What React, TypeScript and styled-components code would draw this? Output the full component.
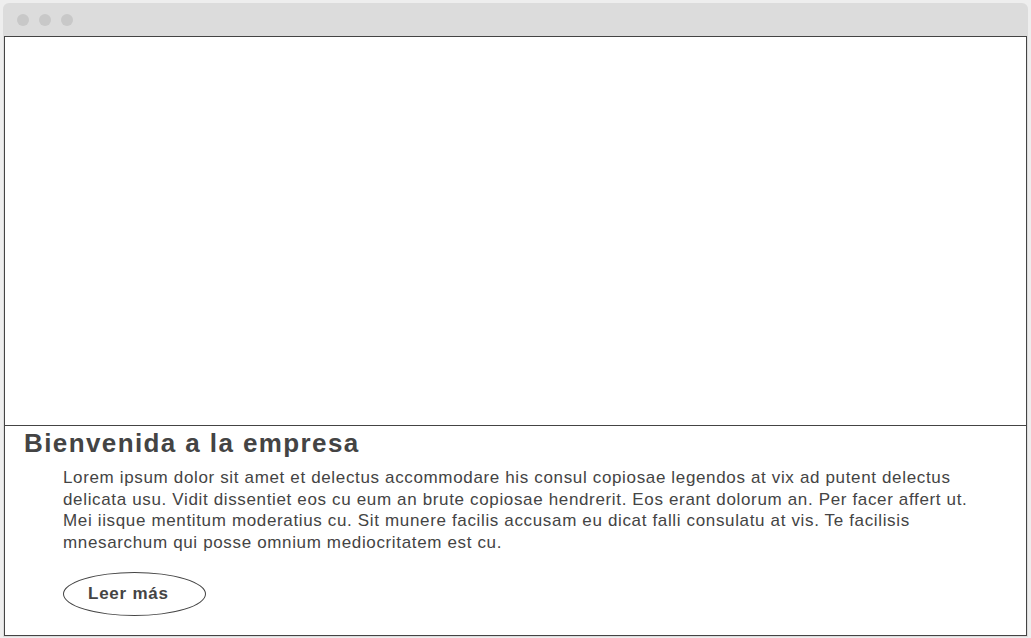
import React from "react";
import styled, { createGlobalStyle } from "styled-components";

const Global = createGlobalStyle`
  html, body { margin: 0; padding: 0; background: #eeeeee; }
  body { font-family: "Liberation Sans", Arial, sans-serif; }
`;

const Window = styled.div`
  margin: 3px 0 0 3px;
  width: 1025px;
  height: 634px;
  box-sizing: border-box;
  background: #dcdcdc;
  border-radius: 6px 6px 0 0;
  padding: 0 1px 1px 1px;
  display: flex;
  flex-direction: column;
`;

const TitleBar = styled.div`
  height: 33px;
  display: flex;
  align-items: center;
  gap: 10px;
  padding-left: 13px;
  flex-shrink: 0;
`;

const Dot = styled.span`
  width: 12px;
  height: 12px;
  border-radius: 50%;
  background: #c8c8c8;
`;

const Content = styled.div`
  flex: 1;
  background: #ffffff;
  border: 1px solid #444444;
  display: flex;
  flex-direction: column;
`;

const Hero = styled.div`
  height: 388px;
  border-bottom: 1px solid #444444;
  flex-shrink: 0;
`;

const Section = styled.div`
  padding: 1px 19px 0 19px;
  color: #444444;
`;

const Heading = styled.h1`
  margin: 0;
  font-size: 26px;
  font-weight: bold;
  line-height: 32px;
  letter-spacing: 1.4px;
`;

const Body = styled.div`
  padding-left: 39px;
  padding-right: 20px;
`;

const Paragraph = styled.p`
  margin: 8px 0 0 0;
  font-size: 17px;
  line-height: 21.7px;
  letter-spacing: 0.65px;
`;

const Button = styled.button`
  margin-top: 18px;
  width: 143px;
  height: 44px;
  border: 1px solid #444444;
  border-radius: 50%;
  background: #ffffff;
  color: #444444;
  font-family: "Liberation Sans", Arial, sans-serif;
  font-size: 17px;
  font-weight: bold;
  letter-spacing: 0.75px;
  text-align: left;
  padding: 1px 0 0 24px;
`;

export default function App() {
  return (
    <>
      <Global />
      <Window>
        <TitleBar>
          <Dot />
          <Dot />
          <Dot />
        </TitleBar>
        <Content>
          <Hero />
          <Section>
            <Heading>Bienvenida a la empresa</Heading>
            <Body>
              <Paragraph>
                Lorem ipsum dolor sit amet et delectus accommodare his consul copiosae legendos at vix ad putent delectus delicata usu. Vidit dissentiet eos cu eum an brute copiosae hendrerit. Eos erant dolorum an. Per facer affert ut. Mei iisque mentitum moderatius cu. Sit munere facilis accusam eu dicat falli consulatu at vis. Te facilisis mnesarchum qui posse omnium mediocritatem est cu.
              </Paragraph>
              <Button>Leer más</Button>
            </Body>
          </Section>
        </Content>
      </Window>
    </>
  );
}
